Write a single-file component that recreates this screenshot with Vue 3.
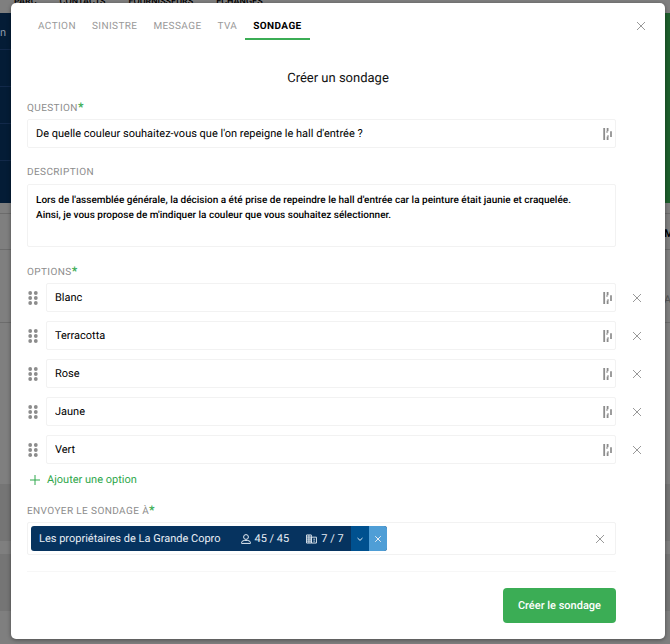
<script setup>
import { ref } from 'vue'

const menu = ['Parc', 'Contacts', 'Fournisseurs', 'Échanges']
const tabs = ['Action', 'Sinistre', 'Message', 'TVA', 'Sondage']
const activeTab = ref('Sondage')

const question = ref("De quelle couleur souhaitez-vous que l'on repeigne le hall d'entrée ?")
const description = ref("Lors de l'assemblée générale, la décision a été prise de repeindre le hall d'entrée car la peinture était jaunie et craquelée.\nAinsi, je vous propose de m'indiquer la couleur que vous souhaitez sélectionner.")

let nextId = 6
const options = ref([
  { id: 1, text: 'Blanc' },
  { id: 2, text: 'Terracotta' },
  { id: 3, text: 'Rose' },
  { id: 4, text: 'Jaune' },
  { id: 5, text: 'Vert' }
])
const recipients = ref([
  { name: 'Les propriétaires de La Grande Copro', people: '45 / 45', buildings: '7 / 7' }
])

const addOption = () => {
  options.value.push({ id: nextId++, text: '' })
}
const removeOption = (id) => {
  options.value = options.value.filter(o => o.id !== id)
}
const clearRecipients = () => {
  recipients.value = []
}
</script>

<template>
  <div class="screen">
    <div class="backdrop" aria-hidden="true">
      <div class="menu">
        <span v-for="m in menu" :key="m">{{ m }}</span>
      </div>
      <div class="band">
        <div class="band-side">
          <div class="cell">n</div>
          <div class="cell"></div>
          <div class="cell"></div>
          <div class="cell"></div>
          <div class="cell"></div>
        </div>
        <div class="band-main"></div>
      </div>
      <div class="under">
        <div class="strip"></div>
        <div class="under-row"><b>M</b></div>
        <div class="under-row tall">A</div>
        <div class="block gap"></div>
        <div class="block dark"></div>
        <div class="block thin"></div>
        <div class="block dark"></div>
      </div>
    </div>

    <div class="modal" role="dialog" aria-labelledby="title">
      <header class="head">
        <nav class="tabs">
          <button
            v-for="t in tabs"
            :key="t"
            type="button"
            class="tab"
            :class="{ active: t === activeTab }"
            @click="activeTab = t"
          >{{ t }}</button>
        </nav>
        <button type="button" class="icon-btn" aria-label="Fermer">
          <svg class="cross" viewBox="0 0 10 10"><path d="M1 1l8 8M9 1L1 9" /></svg>
        </button>
      </header>

      <h1 id="title" class="title">Créer un sondage</h1>

      <form class="form" @submit.prevent>
        <label class="label" for="question">Question<b>*</b></label>
        <div class="field">
          <input id="question" v-model="question" type="text">
          <svg class="bars" viewBox="0 0 10 12">
            <path d="M1.2 0v12M4.6 0v3.2M4.6 8.6V12" stroke-width="1.8" />
            <path d="M4 3v2M5 7v2" stroke-width="1" />
            <path d="M8 3.2v5.8" stroke-width="1.7" />
          </svg>
        </div>

        <label class="label" for="description">Description</label>
        <textarea id="description" v-model="description" class="area"></textarea>

        <div id="options-label" class="label">Options<b>*</b></div>
        <div class="options" role="group" aria-labelledby="options-label">
          <div v-for="(o, i) in options" :key="o.id" class="option">
            <svg class="grip" viewBox="0 0 10 14">
              <circle cx="2.2" cy="2" r="1.9" /><circle cx="7.8" cy="2" r="1.9" />
              <circle cx="2.2" cy="7" r="1.9" /><circle cx="7.8" cy="7" r="1.9" />
              <circle cx="2.2" cy="12" r="1.9" /><circle cx="7.8" cy="12" r="1.9" />
            </svg>
            <div class="field">
              <input v-model="o.text" type="text" :aria-label="'Option ' + (i + 1)">
              <svg class="bars" viewBox="0 0 10 12">
                <path d="M1.2 0v12M4.6 0v3.2M4.6 8.6V12" stroke-width="1.8" />
                <path d="M4 3v2M5 7v2" stroke-width="1" />
                <path d="M8 3.2v5.8" stroke-width="1.7" />
              </svg>
            </div>
            <button type="button" class="icon-btn remove" aria-label="Supprimer" @click="removeOption(o.id)">
              <svg class="cross" viewBox="0 0 10 10"><path d="M1 1l8 8M9 1L1 9" /></svg>
            </button>
          </div>
        </div>
        <button type="button" class="add" @click="addOption">
          <svg viewBox="0 0 10 10"><path d="M5 0v10M0 5h10" /></svg>
          Ajouter une option
        </button>

        <div id="to-label" class="label">Envoyer le sondage à<b>*</b></div>
        <div class="field recipients" role="group" aria-labelledby="to-label">
          <div v-for="r in recipients" :key="r.name" class="chip">
            <span class="chip-name">{{ r.name }}</span>
            <span class="count">
              <svg class="person" viewBox="0 0 10 10">
                <circle cx="5" cy="3" r="2.4" />
                <path d="M.6 9.4V8.3C.6 7 2.8 6.4 5 6.4s4.4.6 4.4 1.9v1.1z" />
              </svg>
              {{ r.people }}
            </span>
            <span class="count">
              <svg class="building" viewBox="0 0 12 10">
                <path d="M.6.6h5.2v8.8H.6zM5.8 3h5.6v6.4H5.8zM.6 2.9h5.2M.6 5.1h5.2M.6 7.3h5.2M3.2.6v8.8M8 5.2h1.8M8 7.3h1.8" />
              </svg>
              {{ r.buildings }}
            </span>
            <button type="button" class="chip-btn open" aria-label="Détails">
              <svg viewBox="0 0 8 8"><path d="M1.5 3L4 5.4 6.5 3" /></svg>
            </button>
            <button type="button" class="chip-btn close" aria-label="Retirer" @click="clearRecipients">
              <svg viewBox="0 0 8 8"><path d="M1.2 1.2l5.6 5.6M6.8 1.2L1.2 6.8" /></svg>
            </button>
          </div>
          <button type="button" class="icon-btn clear" aria-label="Effacer" @click="clearRecipients">
            <svg class="cross" viewBox="0 0 10 10"><path d="M1 1l8 8M9 1L1 9" /></svg>
          </button>
        </div>

        <footer class="foot">
          <button type="submit" class="submit">Créer le sondage</button>
        </footer>
      </form>
    </div>
  </div>
</template>

<style>
body {
  margin: 0;
  background: #7f7f7f;
}
</style>

<style scoped>
* {
  box-sizing: border-box;
}
.screen {
  position: relative;
  min-height: 100vh;
  padding: 3px 5px 5px 11px;
  font-family: Roboto, "Liberation Sans", sans-serif;
  font-size: 11px;
  text-rendering: geometricPrecision;
  color: #000;
}
button, input, textarea {
  font: inherit;
  text-rendering: inherit;
  color: inherit;
  margin: 0;
  padding: 0;
  border: 0;
  background: none;
}
button {
  cursor: pointer;
}
svg {
  display: block;
  flex: none;
  fill: none;
  stroke: currentColor;
}

/* page behind the dialog */
.backdrop {
  position: absolute;
  inset: 0;
  overflow: hidden;
  background: #7f7f7f;
}
.menu {
  display: flex;
  gap: 23px;
  height: 13px;
  padding-left: 14px;
  font-size: 9px;
  line-height: 4px;
  font-weight: 500;
  text-transform: uppercase;
}
.band {
  display: flex;
  height: 190px;
}
.band-side {
  flex: 1;
  background: #041c36;
}
.cell {
  height: 37px;
  line-height: 40px;
  color: #8d9aa8;
  border-bottom: 1px solid #12294a;
}
.cell:last-child {
  border: 0;
}
.band-main {
  flex: 1;
  background: #1d5f2c;
}
.strip {
  height: 11px;
  border-bottom: 1px solid #6c6c6c;
}
.under-row {
  height: 36px;
  padding-left: calc(100% - 6px);
  line-height: 40px;
  border-bottom: 1px solid #6c6c6c;
}
.under-row.tall {
  height: 73px;
  line-height: 100px;
  color: #555;
}
.block.gap {
  height: 161px;
}
.block.dark {
  height: 57px;
  background: #757575;
}
.block.thin {
  height: 13px;
}

.modal {
  position: relative;
  padding: 0 16px 16px;
  border-radius: 5px;
  background: #fff;
  box-shadow: 0 1px 4px rgba(0, 0, 0, 0.4);
}
.head {
  display: flex;
  align-items: flex-start;
  justify-content: space-between;
}
.tabs {
  display: flex;
  padding-left: 3px;
}
.tab {
  height: 37px;
  padding: 11px 8px 0;
  font-size: 10px;
  letter-spacing: 0.04em;
  text-transform: uppercase;
  color: #999;
  border-bottom: 2px solid transparent;
}
.tab.active {
  font-weight: 700;
  color: #000;
  border-bottom-color: #3bad55;
}
.icon-btn {
  display: flex;
  align-items: center;
  justify-content: center;
  width: 16px;
  height: 16px;
  flex: none;
  color: #999;
}
.head .icon-btn {
  margin-top: 15px;
}
.cross {
  width: 10px;
  height: 10px;
}
.title {
  margin: 29px 0 0;
  font-size: 13px;
  line-height: 20px;
  font-weight: 400;
  text-align: center;
  color: #111;
}
.form {
  padding-right: 33px;
}
.label {
  display: block;
  height: 17px;
  margin-top: 19px;
  line-height: 12px;
  font-size: 10px;
  letter-spacing: 0.04em;
  text-transform: uppercase;
  color: #8c8c8c;
}
.label:first-child {
  margin-top: 13px;
}
.label b {
  font-size: 12px;
  line-height: 10px;
  color: #3bad55;
}
.field {
  display: flex;
  align-items: center;
  flex: 1;
  height: 29px;
  padding: 0 2px 0 8px;
  border: 1px solid #f2f2f2;
  border-radius: 2px;
}
.field input {
  flex: 1;
  min-width: 0;
  outline: none;
}
.bars {
  width: 10px;
  height: 12px;
  color: #8c8c8c;
}
.area {
  display: block;
  width: 100%;
  height: 63px;
  padding: 8px;
  font-size: 10px;
  font-weight: 500;
  line-height: 15px;
  border: 1px solid #f2f2f2;
  border-radius: 2px;
  resize: none;
  outline: none;
}
.options {
  display: grid;
  gap: 9px;
}
.option {
  display: flex;
  align-items: center;
  margin-right: -29px;
}
.grip {
  width: 10px;
  height: 14px;
  margin: 0 8px 0 1px;
  fill: #8c8c8c;
  stroke: none;
}
.remove {
  margin-left: 13px;
}
.add {
  display: flex;
  align-items: center;
  gap: 7px;
  margin-top: 8px;
  padding-left: 3px;
  line-height: 16px;
  color: #2fa84c;
}
.add svg {
  width: 10px;
  height: 10px;
}
.add + .label {
  margin-top: 17px;
}
.recipients {
  height: 33px;
  padding: 0 7px 0 3px;
}
.chip {
  display: flex;
  align-items: center;
  height: 25px;
  border-radius: 3px;
  overflow: hidden;
  background: #06335f;
  color: #e6edf4;
}
.chip-name {
  padding: 0 20px 0 8px;
}
.count {
  display: flex;
  align-items: center;
  gap: 4px;
  padding-right: 17px;
}
.count + .count {
  padding-right: 7px;
}
.person {
  width: 10px;
  height: 10px;
}
.building {
  width: 11px;
  height: 10px;
}
.chip-btn {
  display: flex;
  align-items: center;
  justify-content: center;
  width: 18px;
  height: 25px;
}
.chip-btn svg {
  width: 8px;
  height: 8px;
}
.open {
  background: #00518f;
}
.close {
  background: #4f9ed6;
}
.clear {
  margin-left: auto;
}
.foot {
  display: flex;
  justify-content: flex-end;
  margin-top: 16px;
  padding-top: 16px;
  border-top: 1px solid #f7f7f7;
}
.submit {
  height: 35px;
  padding: 0 15px;
  border-radius: 4px;
  font-weight: 500;
  color: #fff;
  background: #3bad55;
}
</style>
